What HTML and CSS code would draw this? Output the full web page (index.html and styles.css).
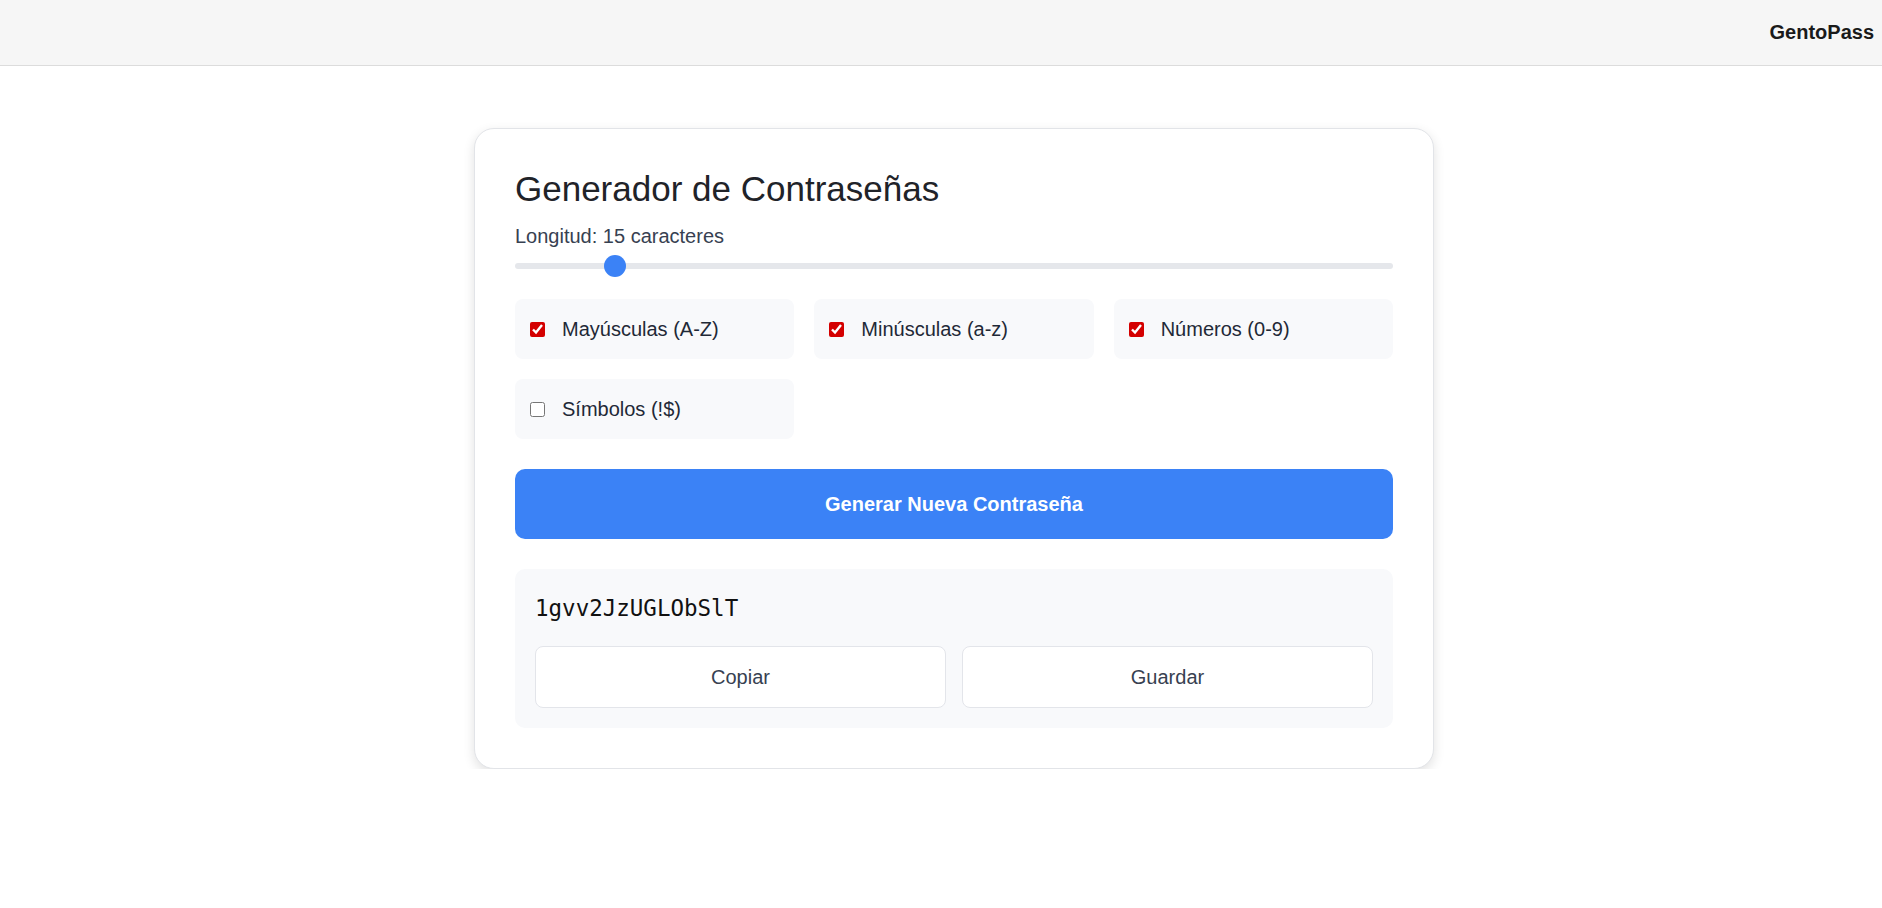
FILE: index.html
```html
<!DOCTYPE html>
<html lang="es">
<head>
<meta charset="utf-8">
<title>GentoPass</title>
<link rel="stylesheet" href="styles.css">
</head>
<body>
<header class="topbar">
  <span class="brand">GentoPass</span>
</header>
<main class="page">
  <section class="card">
    <h1 class="title">Generador de Contraseñas</h1>
    <label class="length-label" for="len">Longitud: 15 caracteres</label>
    <div class="slider-wrap">
      <input id="len" class="slider" type="range" min="8" max="75" value="15">
    </div>
    <div class="options">
      <label class="option"><input type="checkbox" checked><span>Mayúsculas (A-Z)</span></label>
      <label class="option"><input type="checkbox" checked><span>Minúsculas (a-z)</span></label>
      <label class="option"><input type="checkbox" checked><span>Números (0-9)</span></label>
      <label class="option"><input type="checkbox"><span>Símbolos (!$)</span></label>
    </div>
    <button class="generate" type="button">Generar Nueva Contraseña</button>
    <div class="result">
      <div class="password">1gvv2JzUGLObSlT</div>
      <div class="actions">
        <button class="action" type="button">Copiar</button>
        <button class="action" type="button">Guardar</button>
      </div>
    </div>
  </section>
</main>
</body>
</html>
```

FILE: styles.css
```css
* { box-sizing: border-box; }
html, body { margin: 0; padding: 0; }
body {
  font-family: "Liberation Sans", Arial, sans-serif;
  background: #ffffff;
  color: #1f2937;
}
.topbar {
  height: 66px;
  background: #f6f6f6;
  border-bottom: 1px solid #dcdcdc;
  display: flex;
  align-items: center;
  justify-content: flex-end;
  padding: 0 8px 1px 0;
}
.brand {
  font-weight: 700;
  font-size: 20px;
  color: #1a1a1a;
}
.page {
  display: flex;
  justify-content: center;
  padding: 62px 0 0 26px;
}
.card {
  width: 960px;
  background: #fff;
  border: 1px solid #e2e4e8;
  border-radius: 20px;
  box-shadow: 0 4px 12px rgba(0,0,0,0.12);
  padding: 40px;
  display: flex;
  flex-direction: column;
}
.title {
  margin: 0;
  font-size: 35px;
  font-weight: 400;
  line-height: normal;
  color: #1f2329;
}
.length-label {
  margin-top: 16px;
  font-size: 20px;
  line-height: 23px;
  color: #374151;
}
.slider-wrap {
  margin-top: 6px;
  height: 23px;
  display: flex;
  align-items: center;
}
.slider {
  -webkit-appearance: none;
  appearance: none;
  width: 100%;
  height: 6px;
  margin: 0;
  background: #e5e7eb;
  border-radius: 3px;
  outline: none;
}
.slider::-webkit-slider-thumb {
  -webkit-appearance: none;
  appearance: none;
  width: 22px;
  height: 22px;
  border-radius: 50%;
  background: #3b82f6;
  border: none;
}
.options {
  margin-top: 22px;
  display: grid;
  grid-template-columns: repeat(3, 1fr);
  gap: 20px;
}
.option {
  height: 60px;
  background: #f8f9fb;
  border-radius: 8px;
  display: flex;
  align-items: center;
  padding: 0 15px;
  gap: 17px;
  font-size: 20px;
  color: #1f2937;
}
.option input {
  margin: 0;
  width: 15px;
  height: 15px;
  accent-color: #d40000;
}
.generate {
  margin-top: 30px;
  height: 70px;
  border: none;
  border-radius: 10px;
  background: #3b82f6;
  color: #fff;
  font-family: "Liberation Sans", Arial, sans-serif;
  font-weight: 700;
  font-size: 20px;
}
.result {
  margin-top: 30px;
  background: #f8f9fb;
  border-radius: 10px;
  padding: 20px;
}
.password {
  font-family: "DejaVu Sans Mono", "Liberation Mono", monospace;
  font-size: 22.5px;
  line-height: 38px;
  color: #111;
  margin-bottom: 19px;
}
.actions {
  display: grid;
  grid-template-columns: 1fr 1fr;
  gap: 16px;
}
.action {
  height: 62px;
  background: #fff;
  border: 1px solid #e3e5ea;
  border-radius: 8px;
  font-family: "Liberation Sans", Arial, sans-serif;
  font-size: 20px;
  color: #374151;
}
```
